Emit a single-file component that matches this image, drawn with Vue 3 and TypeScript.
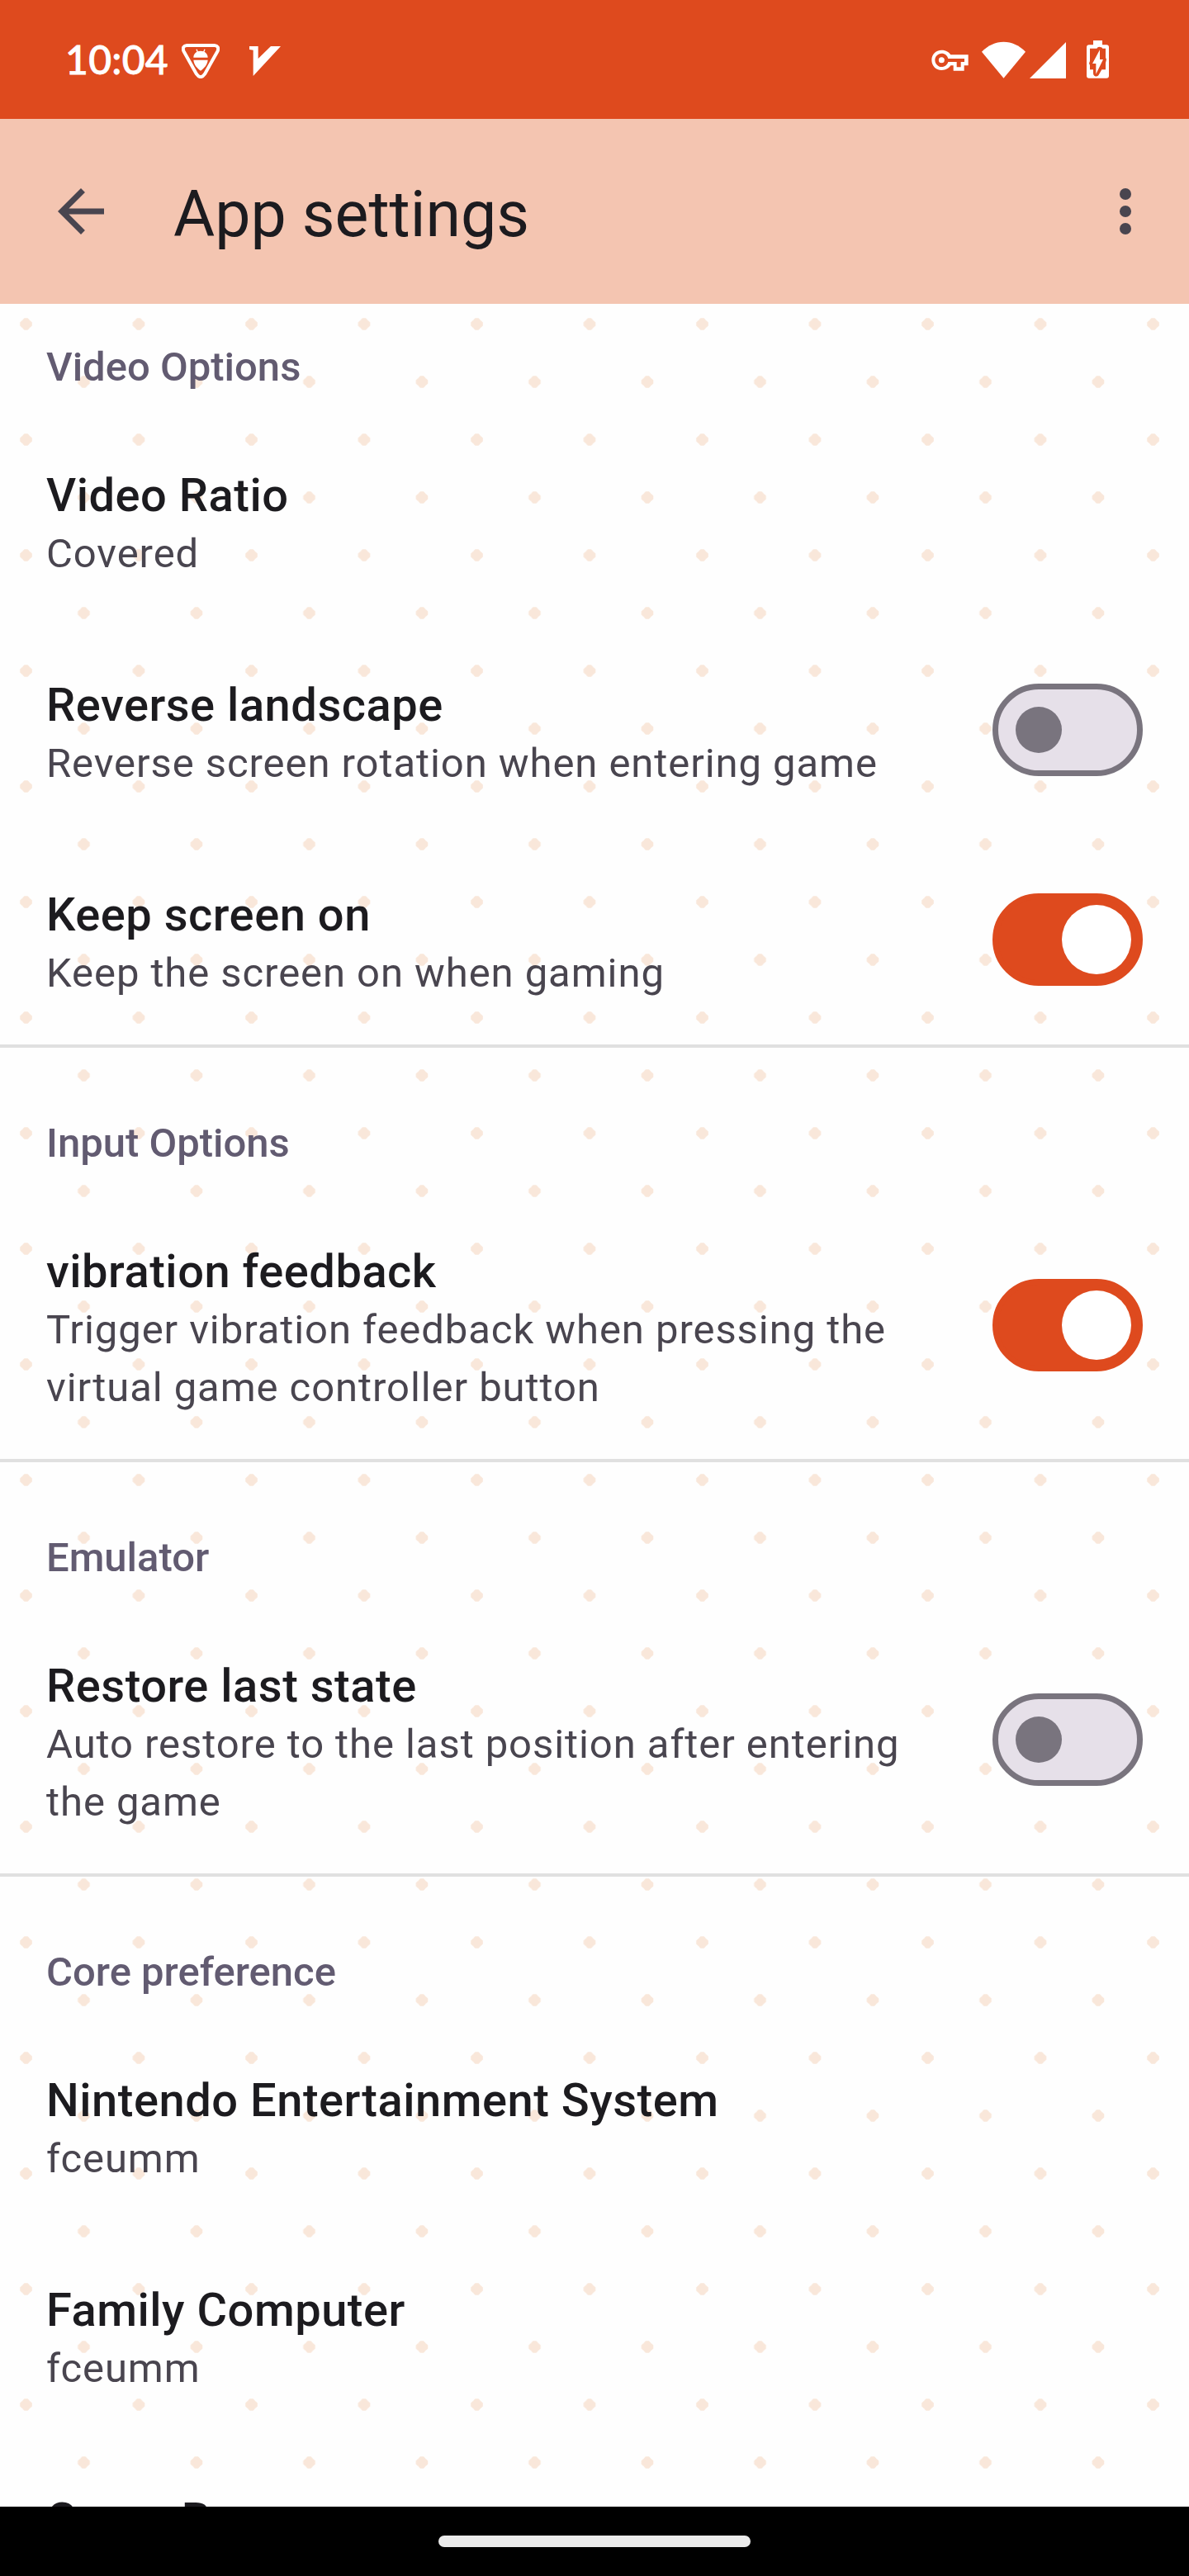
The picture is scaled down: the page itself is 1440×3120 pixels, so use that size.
<script setup lang="ts">
interface Item {
  title: string
  summary?: string
  toggle?: boolean
}
interface Group {
  header: string
  items: Item[]
}

const groups: Group[] = [
  {
    header: 'Video Options',
    items: [
      { title: 'Video Ratio', summary: 'Covered' },
      { title: 'Reverse landscape', summary: 'Reverse screen rotation when entering game', toggle: false },
      { title: 'Keep screen on', summary: 'Keep the screen on when gaming', toggle: true },
    ],
  },
  {
    header: 'Input Options',
    items: [
      {
        title: 'vibration feedback',
        summary: 'Trigger vibration feedback when pressing the virtual game controller button',
        toggle: true,
      },
    ],
  },
  {
    header: 'Emulator',
    items: [
      {
        title: 'Restore last state',
        summary: 'Auto restore to the last position after entering the game',
        toggle: false,
      },
    ],
  },
  {
    header: 'Core preference',
    items: [
      { title: 'Nintendo Entertainment System', summary: 'fceumm' },
      { title: 'Family Computer', summary: 'fceumm' },
      { title: 'Game Boy' },
    ],
  },
]
</script>

<template>
  <div class="screen">
    <header class="status">
      <div class="status-left">
        <span class="clock">10:04</span>
        <svg class="ic-bug" width="46" height="42" viewBox="0 0 138 126">
          <path d="M19 6H119Q137 8 131 26L84 110Q69 131 54 110L7 26Q1 8 19 6Z" fill="none" stroke="#fff" stroke-width="12" stroke-linejoin="round" />
          <path d="M43 50C43 36 54 26 69 26S95 36 95 50ZM43 59H95C93 77 83 87 69 98C55 87 45 77 43 59Z" fill="#fff" />
          <path d="M54 20L58 30M84 20L80 30" stroke="#fff" stroke-width="4" />
        </svg>
        <svg class="ic-v" width="38" height="36" viewBox="0 0 114 108">
          <path d="M0 0H32V45L78 0H114L14 108V14L0 12Z" fill="#fff" />
        </svg>
      </div>
      <div class="status-right">
        <svg class="ic-key" width="45" height="26" viewBox="0 0 135 78">
          <path fill="#fff" fill-rule="evenodd" d="M37 2C53 2 65 10 70 19H134V58H119V77H80V58H70C64 68 53 75 37 75C16 75 1 58 1 38S16 2 37 2ZM37 14C24 14 13 25 13 38S24 63 37 63C50 63 58 55 61 45H92V64H107V45H120V33H61C58 22 50 14 37 14Z" />
          <circle cx="37" cy="38" r="10.500" fill="#fff" />
        </svg>
        <svg class="ic-wifi" width="53" height="45" viewBox="0 0 159 135">
          <path d="M0 38C22 15 50 2 79.500 2S137 15 159 38L79.500 134Z" fill="#fff" />
        </svg>
        <svg class="ic-signal" width="44" height="44" viewBox="0 0 132 132">
          <path d="M0 132L132 0V132Z" fill="#fff" />
        </svg>
        <svg class="ic-battery" width="27" height="46" viewBox="0 0 81 138">
          <path d="M24 0H57V16H72Q81 16 81 25V128Q81 137 72 137H9Q0 137 0 128V25Q0 16 9 16H24Z" fill="#fff" />
          <path d="M12 29H37Q41 22 49 24Q57 24 58 29H69V62L72 69L69 82V106H55L43 127Q36 134 28 128Q24 125 24 119V106H12V90L9 83L12 75Z" fill="#de4a1e" />
          <path d="M48 34V69H60L34 122V84H21Z" fill="#fff" />
        </svg>
      </div>
    </header>

    <div class="appbar">
      <svg class="back" width="84" height="84" viewBox="0 0 24 24">
        <path fill="#49454f" d="M20 11H7.830l5.590-5.590L12 4l-8 8 8 8 1.410-1.410L7.830 13H20v-2z" />
      </svg>
      <h1>App settings</h1>
      <svg width="84" height="84" viewBox="0 0 24 24" fill="#49454f">
        <circle cx="12" cy="6" r="2" />
        <circle cx="12" cy="12" r="2" />
        <circle cx="12" cy="18" r="2" />
      </svg>
    </div>

    <main class="content">
      <svg class="pattern" width="1440" height="2668" aria-hidden="true">
        <defs>
          <pattern id="dots" width="136.500" height="140" patternUnits="userSpaceOnUse">
            <g fill="#f9e7da">
              <path id="dot" d="M29.500 17.200H33.500L35.700 19.500V20.300H36.500L38.800 22.500V26.500L36.500 28.700H35.700V29.500L33.500 31.800H29.500L27.300 29.500V28.700H26.500L24.200 26.500V22.500L26.500 20.300H27.300V19.500Z" />
              <use href="#dot" x="70" y="70" />
            </g>
          </pattern>
        </defs>
        <rect width="1440" height="2668" fill="url(#dots)" />
      </svg>
      <section v-for="group in groups" :key="group.header" class="group">
        <h2>{{ group.header }}</h2>
        <div class="items">
          <div v-for="item in group.items" :key="item.title" class="item">
            <div class="text">
              <div class="title">{{ item.title }}</div>
              <div v-if="item.summary" class="summary">{{ item.summary }}</div>
            </div>
            <div v-if="item.toggle !== undefined" class="switch" :class="{ on: item.toggle }">
              <span class="thumb"></span>
            </div>
          </div>
        </div>
      </section>
    </main>

    <footer class="nav"><span class="handle"></span></footer>
  </div>
</template>

<style>
body {
  margin: 0;
}
</style>

<style scoped>
.screen {
  width: 1440px;
  height: 3120px;
  display: flex;
  flex-direction: column;
  overflow: hidden;
  background: #fefefe;
  font-family: Roboto, sans-serif;
}
.status {
  height: 144px;
  flex: none;
  box-sizing: border-box;
  padding: 0 97px 0 79px;
  display: flex;
  justify-content: space-between;
  background: #de4a1e;
}
.status-left,
.status-right {
  display: flex;
  align-items: flex-start;
}
.clock {
  width: 141px;
  margin-top: 43px;
  font: 500 48px/58px Lato, sans-serif;
  letter-spacing: 0.3px;
  -webkit-text-stroke: 0.8px #fff;
  color: #fff;
  white-space: nowrap;
}
.ic-bug {
  margin-top: 53px;
}
.ic-v {
  margin: 56px 0 0 36px;
}
.ic-key {
  margin: 60px 16px 0 0;
}
.ic-wifi {
  margin: 50px 5px 0 0;
}
.ic-signal {
  margin: 51px 25px 0 0;
}
.ic-battery {
  margin-top: 49px;
}
.appbar {
  height: 224px;
  flex: none;
  box-sizing: border-box;
  padding: 0 35px 0 56px;
  display: flex;
  align-items: center;
  background: #f4c5b1;
}
.appbar h1 {
  flex: 1;
  margin: 0;
  padding: 7px 0 0 70px;
  font-size: 77px;
  line-height: 98px;
  font-weight: 400;
  color: #1c1b1f;
}
.content {
  position: relative;
  height: 2668px;
  flex: none;
  overflow: hidden;
}
.pattern {
  position: absolute;
  top: 0;
  left: 0;
}
.group {
  position: relative;
  padding-top: 81px;
}
.group:first-of-type {
  padding-top: 42px;
}
.group + .group {
  border-top: 4px solid #e0e0e0;
}
h2 {
  margin: 0 56px 33px;
  font-size: 49px;
  line-height: 70px;
  font-weight: 500;
  color: #625b71;
}
.items {
  display: flex;
  flex-direction: column;
  gap: 10px;
}
.item {
  display: flex;
  align-items: center;
  justify-content: space-between;
  padding: 52px 56px;
}
.text {
  width: 1060px;
}
.title {
  font-size: 56px;
  line-height: 70px;
  font-weight: 500;
  letter-spacing: 0.53px;
  color: #1c1b1f;
}
.summary {
  margin: 1px 0 -1px;
  font-size: 49px;
  line-height: 70px;
  letter-spacing: 0.93px;
  color: #49454f;
}
.switch {
  width: 182px;
  height: 112px;
  margin-bottom: 10px;
  box-sizing: border-box;
  border: 7px solid #79747e;
  border-radius: 56px;
  padding: 0 21px;
  display: flex;
  align-items: center;
  background: #e6e0e9;
}
.thumb {
  width: 56px;
  height: 56px;
  border-radius: 50%;
  background: #79747e;
}
.switch.on {
  justify-content: flex-end;
  padding: 0 7px;
  border-color: #de4a1e;
  background: #de4a1e;
}
.on .thumb {
  width: 84px;
  height: 84px;
  background: #fff;
}
.nav {
  flex: 1;
  display: flex;
  align-items: center;
  justify-content: center;
  background: #000;
}
.handle {
  width: 378px;
  height: 14px;
  border-radius: 7px;
  background: #ebebeb;
}
</style>
